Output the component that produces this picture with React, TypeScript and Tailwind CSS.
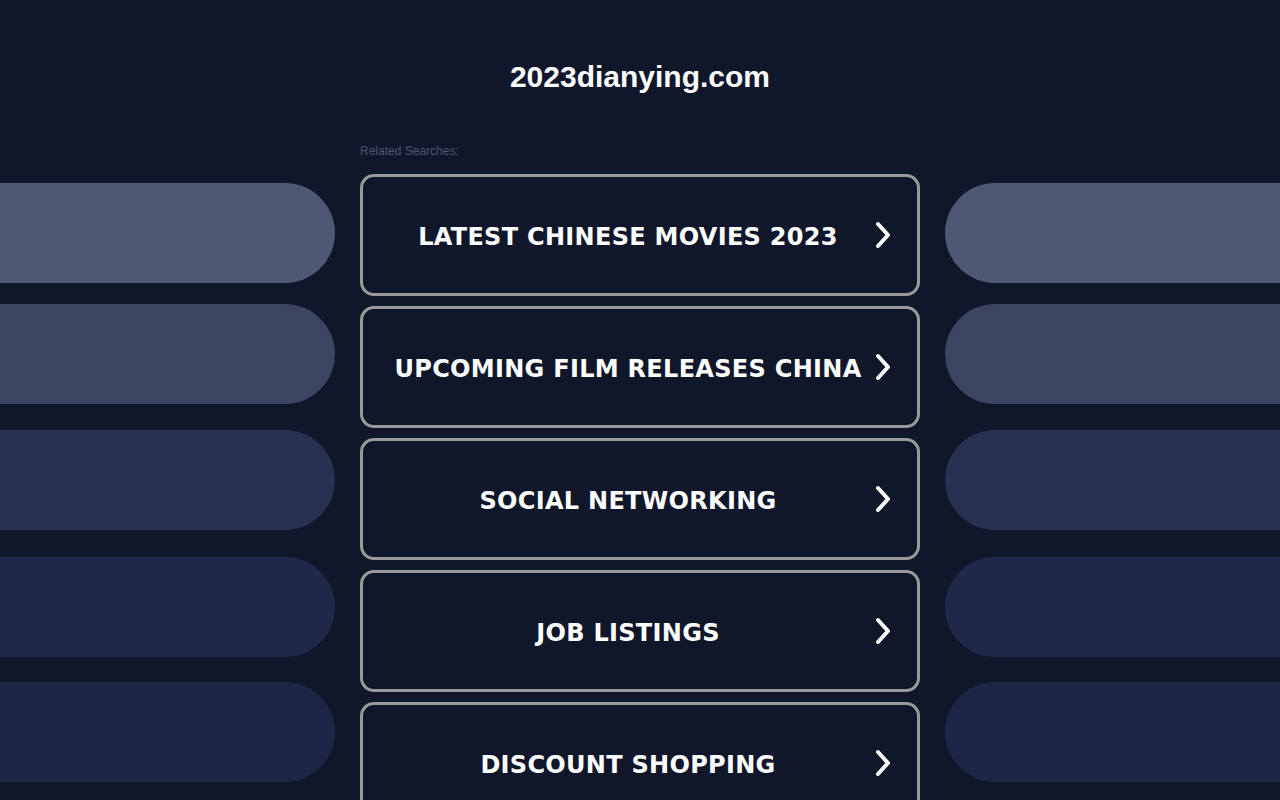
const searches = [
  "LATEST CHINESE MOVIES 2023",
  "UPCOMING FILM RELEASES CHINA",
  "SOCIAL NETWORKING",
  "JOB LISTINGS",
  "DISCOUNT SHOPPING",
]

// side pills, fading down the page
const pills = [
  { color: "bg-[#4e5773]", gap: "mt-[183px]" },
  { color: "bg-[#3b4460]", gap: "mt-[21px]" },
  { color: "bg-[#283150]", gap: "mt-[26px]" },
  { color: "bg-[#1f2848]", gap: "mt-[27px]" },
  { color: "bg-[#1d2646]", gap: "mt-[25px]" },
]

function Pills({ side }: { side: "left" | "right" }) {
  return (
    <div className="flex flex-col w-[335px] shrink-0">
      {pills.map((p, i) => (
        <div
          key={i}
          className={`${p.gap} ${p.color} h-[100px] ${side === "left" ? "rounded-r-[50px]" : "rounded-l-[50px]"}`}
        />
      ))}
    </div>
  )
}

function Chevron() {
  return (
    <svg
      width="18"
      height="30"
      viewBox="0 0 18 30"
      className="absolute right-[25px] top-1/2 -translate-y-1/2"
      fill="none"
      stroke="white"
      strokeWidth="4"
      strokeLinecap="round"
      strokeLinejoin="round"
    >
      <polyline points="4,4 14,15 4,26" />
    </svg>
  )
}

export default function App() {
  return (
    <div className="h-[800px] overflow-hidden bg-[#11172b] flex justify-between font-['Liberation_Sans',Arial,sans-serif]">
      <Pills side="left" />

      <div className="w-[560px] shrink-0 flex flex-col">
        <h1 className="mt-[59px] text-center text-white text-[30px] font-bold leading-[36px]">
          2023dianying.com
        </h1>
        <div className="mt-[49px] text-[12px] leading-[14px] text-[#4b5575]">Related Searches:</div>
        <div className="mt-[16px] flex flex-col gap-[10px]">
          {searches.map((s) => (
            <a
              key={s}
              href="#"
              className="relative h-[122px] shrink-0 border-[3px] border-[#999999] rounded-[14px] flex items-center justify-center pr-[24px] pt-[4px]"
            >
              <span className="text-white font-bold text-[24px] tracking-[0.3px] font-['DejaVu_Sans',Verdana,sans-serif]">
                {s}
              </span>
              <Chevron />
            </a>
          ))}
        </div>
      </div>

      <Pills side="right" />
    </div>
  )
}
